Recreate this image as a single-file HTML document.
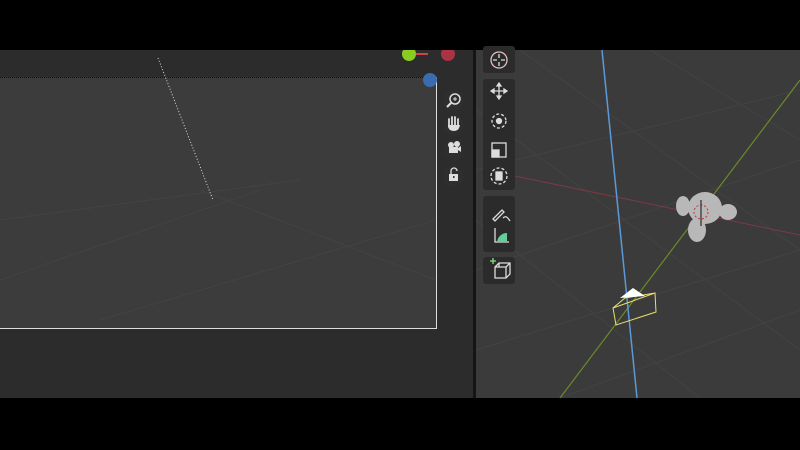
<!DOCTYPE html>
<html><head><style>
body{margin:0;width:800px;height:450px;background:#000;position:relative;overflow:hidden;font-family:"Liberation Sans","DejaVu Sans",sans-serif}
.a{position:absolute}
.btn{position:absolute;left:483px;width:32px;height:27px;background:#2b2b2b;border-radius:3px}
.ic{position:absolute;left:443px;width:21px;height:21px;border-radius:50%;background:#2e2e2e}
</style></head><body>
<div class="a" style="left:0;top:50px;width:473px;height:348px;background:#2c2c2c"></div>
<div class="a" style="left:0;top:77px;width:436px;height:250px;background:#3c3c3c;border-right:1px solid #ddd;border-bottom:1px solid #ddd;border-top:1px dotted #111"></div>
<div class="a" style="left:473px;top:50px;width:3px;height:348px;background:#151515"></div>
<div class="a" style="left:476px;top:50px;width:324px;height:348px;background:#3b3b3b"></div>
<svg class="a" style="left:0;top:50px" width="800" height="348">
<g stroke="#434343" stroke-width="1" fill="none">
<line x1="0" y1="230" x2="260" y2="140"/><line x1="100" y1="270" x2="436" y2="170"/>
<line x1="200" y1="140" x2="436" y2="230"/><line x1="0" y1="170" x2="300" y2="130"/>
<line x1="476" y1="120" x2="800" y2="40"/><line x1="476" y1="220" x2="800" y2="110"/>
<line x1="476" y1="300" x2="800" y2="200"/><line x1="560" y1="348" x2="800" y2="260"/>
<line x1="476" y1="60" x2="800" y2="300"/><line x1="520" y1="0" x2="800" y2="200"/>
<line x1="476" y1="170" x2="700" y2="348"/><line x1="650" y1="0" x2="800" y2="90"/>
</g>
<line x1="158" y1="8" x2="213" y2="150" stroke="#ddd" stroke-dasharray="1 2"/>
<line x1="510" y1="125" x2="800" y2="185" stroke="#7a3a44" stroke-width="1"/>
<line x1="560" y1="348" x2="800" y2="30" stroke="#6a8a2a" stroke-width="1.2"/>
<line x1="602" y1="0" x2="637" y2="348" stroke="#5a9ad8" stroke-width="1.5"/>
<g fill="#b8b8b8"><ellipse cx="705" cy="158" rx="17" ry="16"/><ellipse cx="683" cy="156" rx="7" ry="10"/><ellipse cx="728" cy="162" rx="9" ry="8"/><ellipse cx="697" cy="180" rx="9" ry="12"/></g>
<circle cx="701" cy="162" r="7" fill="none" stroke="#c33" stroke-dasharray="2 2"/>
<line x1="701" y1="150" x2="701" y2="176" stroke="#111"/>
<g fill="none" stroke="#e8e070"><path d="M613 258 L655 243 L656 262 L616 275 Z M613 258 L625 248 L655 243"/></g>
<path d="M620 248 L633 238 L645 246 Z" fill="#fff"/>
</svg>
<div class="a" style="left:402px;top:47px;width:14px;height:14px;border-radius:50%;background:#8c2"></div>
<div class="a" style="left:416px;top:53px;width:12px;height:2px;background:#c44"></div>
<div class="a" style="left:441px;top:47px;width:14px;height:14px;border-radius:50%;background:#a34"></div>
<div class="a" style="left:0;top:0;width:800px;height:50px;background:#000"></div>
<div class="a" style="left:423px;top:73px;width:14px;height:14px;border-radius:50%;background:#3a6db0"></div>
<div class="ic" style="top:90px"></div>
<div class="ic" style="top:115px"></div>
<div class="ic" style="top:140px"></div>
<div class="ic" style="top:166px"></div>
<svg class="a" style="left:443px;top:90px" width="21" height="100" fill="#ddd" stroke="#ddd">
<circle cx="12" cy="9" r="5" fill="none" stroke-width="1.5"/><path d="M8 13l-4 4" stroke-width="2.2"/><path d="M12 7v4M10 9h4" stroke-width="1"/>
<path d="M6 37v-8M9 37v-10M12 37v-10M15 37v-8" stroke-width="1.8" stroke-linecap="round"/><path d="M5 35q0 6 6 6q5 0 6-6z" stroke="none"/>
<circle cx="8" cy="55" r="3" stroke="none"/><circle cx="14" cy="54" r="3" stroke="none"/><rect x="6" y="57" width="9" height="6" stroke="none"/><path d="M15 58l3-2v6l-3-2z" stroke="none"/>
<rect x="6" y="84" width="9" height="7" stroke="none"/><path d="M8 84v-3a3 3 0 0 1 6 0" fill="none" stroke-width="1.3"/><rect x="10" y="86" width="1.5" height="2" fill="#2e2e2e" stroke="none"/>
</svg>
<div class="btn" style="top:46px"></div>
<div class="btn" style="top:79px;height:111px"></div>
<div class="btn" style="top:196px;height:56px"></div>
<div class="btn" style="top:257px"></div>
<svg class="a" style="left:483px;top:46px" width="32" height="240" fill="none" stroke="#ddd" stroke-width="1.3">
<circle cx="16" cy="14" r="8" stroke="#e6c0c0"/><path d="M16 8v4M16 16v4M10 14h4M18 14h4"/>
<path d="M16 38v14M9 45h14M16 37l-2 3h4zM16 53l-2-3h4zM8 45l3-2v4zM24 45l-3-2v4z" fill="#ddd"/>
<circle cx="16" cy="75" r="7" stroke-dasharray="3 2"/><circle cx="16" cy="75" r="2.5" fill="#ddd"/>
<rect x="9" y="104" width="7" height="7" fill="#ddd"/><rect x="9" y="97" width="14" height="14"/>
<circle cx="16" cy="130" r="8" stroke-dasharray="3 2"/><rect x="13" y="126" width="6" height="8" fill="#ddd"/>
<path d="M10 173l9-9 2 2-9 9zM20 172c3-3 5 0 7 3" /><path d="M12 182v14h14" /><path d="M14 196a10 10 0 0 1 10-9v9z" fill="#6c9" stroke="none"/>
<path d="M12 221l4-4h11v11l-4 4H12zM16 217v4M12 221h11v11M23 221l4-4" stroke="#ddd"/><path d="M7 215h6M10 212v6" stroke="#8d8"/>
</svg>
<div class="a" style="left:0;top:398px;width:800px;height:52px;background:#000"></div>
</body></html>
